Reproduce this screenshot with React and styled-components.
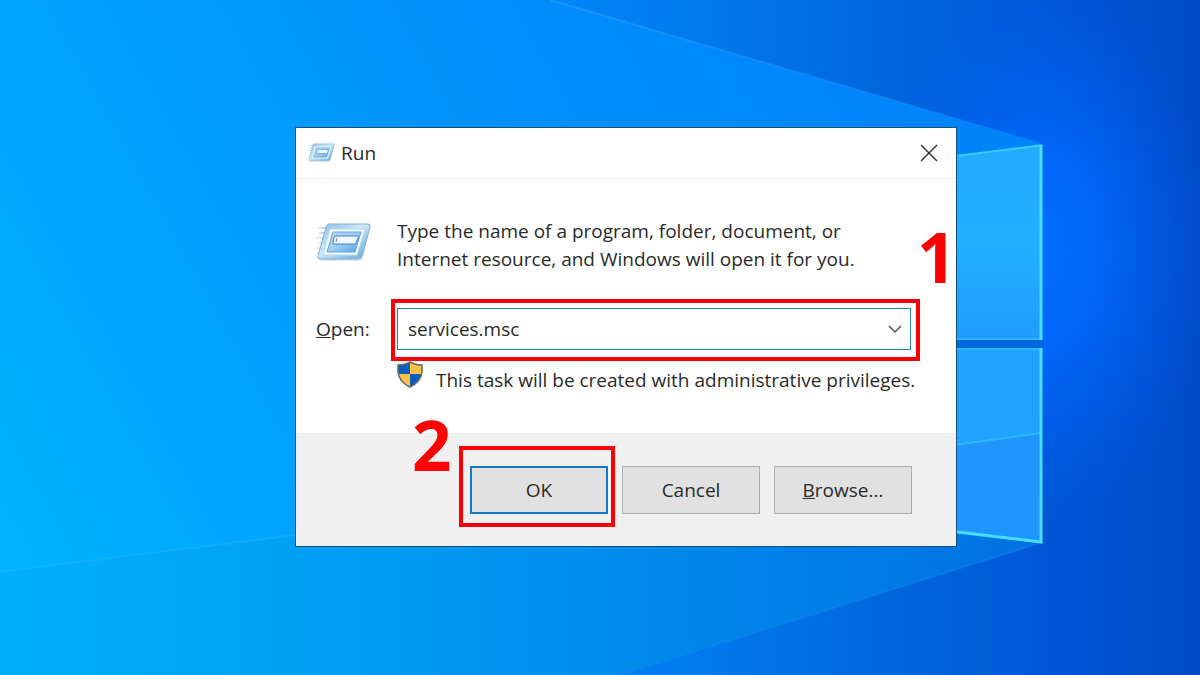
import React from "react";
import styled, { createGlobalStyle } from "styled-components";

const GlobalStyle = createGlobalStyle`
  *, *::before, *::after { box-sizing: border-box; }
  body { margin: 0; font-family: "Open Sans", "Noto Sans", sans-serif; }
`;

const Desktop = styled.main`
  position: relative;
  min-height: 100vh;
  overflow: hidden;
  background: #0078e8;
`;

const WallpaperArt = styled.svg`
  position: absolute;
  inset: 0;
  width: 100%;
  height: 100%;
`;

const Window = styled.section`
  position: absolute;
  top: 127px;
  left: 295px;
  width: 662px;
  border: 1px solid #14507f;
  background: #ffffff;
  color: #2a2a2a;
  font-size: 19px;
  line-height: 28px;
`;

const TitleBar = styled.header`
  display: flex;
  align-items: center;
  gap: 6px;
  height: 51px;
  padding: 0 17px 0 12px;
  border-bottom: 1px solid #ededed;
`;

const Title = styled.h1`
  flex: 1;
  margin: 0;
  font-size: 19px;
  font-weight: 400;
`;

const CloseButton = styled.button`
  display: flex;
  padding: 0;
  border: 0;
  background: none;
  color: #333333;
`;

const Body = styled.div`
  display: grid;
  grid-template-columns: 81px minmax(0, 1fr);
  align-items: center;
  padding: 38px 45px 37px 20px;
`;

const BodyIcon = styled.div`
  display: flex;
  align-self: start;
  padding-top: 6px;
`;

const Message = styled.p`
  margin: 0;
  white-space: nowrap;
`;

const FieldLabel = styled.label`
  margin-top: 35px;
`;

const ComboBox = styled.div`
  position: relative;
  display: flex;
  height: 42px;
  margin-top: 35px;
  border: 1px solid #2f7f9f;
`;

const ComboInput = styled.input`
  flex: 1;
  min-width: 0;
  padding: 0 10px;
  border: 0;
  outline: 0;
  background: transparent;
  color: inherit;
  font: inherit;
`;

const ComboArrow = styled.button`
  display: flex;
  align-items: center;
  justify-content: center;
  width: 30px;
  padding: 0;
  border: 0;
  background: none;
  color: #555555;
`;

const PrivilegeNote = styled.p`
  grid-column: 2;
  display: flex;
  align-items: flex-end;
  gap: 13px;
  margin: 11px 0 0;
  padding-bottom: 2px;
  white-space: nowrap;

  svg { flex: none; margin-bottom: 6px; }
`;

const Footer = styled.footer`
  display: flex;
  justify-content: flex-end;
  gap: 14px;
  padding: 33px 44px 32px;
  background: #f0f0f0;
`;

const ButtonSlot = styled.div`
  position: relative;
`;

const DialogButton = styled.button`
  width: 138px;
  height: 48px;
  padding: 0;
  border: ${(p) => (p.$primary ? "2px solid #1878c8" : "1px solid #adadad")};
  background: #e1e1e1;
  color: inherit;
  font: inherit;
`;

const Highlight = styled.div`
  position: absolute;
  inset: ${(p) => p.$inset};
  border: 4px solid #fb0007;
  pointer-events: none;
`;

const StepNumber = styled.span`
  position: absolute;
  top: ${(p) => p.$top};
  left: ${(p) => p.$left};
  color: #ff0000;
  font-size: 69px;
  font-weight: 700;
  line-height: 70px;
`;

function Wallpaper() {
  return (
    <WallpaperArt viewBox="0 0 1200 675" preserveAspectRatio="none" aria-hidden="true">
      <defs>
        <linearGradient id="base" x1="0" y1="0" x2="1200" y2="0" gradientUnits="userSpaceOnUse">
          <stop offset="0" stopColor="#00a4f6" />
          <stop offset="0.45" stopColor="#0088f8" />
          <stop offset="0.6" stopColor="#0078ea" />
          <stop offset="0.75" stopColor="#0066dc" />
          <stop offset="0.88" stopColor="#0056d6" />
          <stop offset="1" stopColor="#004ac6" />
        </linearGradient>
        <linearGradient id="beam" x1="0" y1="560" x2="900" y2="60" gradientUnits="userSpaceOnUse">
          <stop offset="0" stopColor="#00b4ff" />
          <stop offset="0.3" stopColor="#00a2fc" />
          <stop offset="0.6" stopColor="#0092fb" />
          <stop offset="1" stopColor="#0084fa" />
        </linearGradient>
        <linearGradient id="lower" x1="0" y1="0" x2="1042" y2="0" gradientUnits="userSpaceOnUse">
          <stop offset="0" stopColor="#00b0fc" />
          <stop offset="0.3" stopColor="#009ff4" />
          <stop offset="0.65" stopColor="#0088ea" />
          <stop offset="1" stopColor="#0070e2" />
        </linearGradient>
        <radialGradient
          id="glow"
          cx="0"
          cy="0"
          r="1"
          gradientUnits="userSpaceOnUse"
          gradientTransform="translate(1040 250) scale(170 270)"
        >
          <stop offset="0" stopColor="#006eff" />
          <stop offset="0.35" stopColor="#006aff" stopOpacity="0.85" />
          <stop offset="1" stopColor="#0060f0" stopOpacity="0" />
        </radialGradient>
        <linearGradient id="top-edge" x1="550" y1="0" x2="1040" y2="0" gradientUnits="userSpaceOnUse">
          <stop offset="0" stopColor="#2ba0ff" stopOpacity="0.6" />
          <stop offset="1" stopColor="#2b90ff" stopOpacity="0.1" />
        </linearGradient>
        <linearGradient id="pane" x1="0" y1="145" x2="0" y2="340" gradientUnits="userSpaceOnUse">
          <stop offset="0" stopColor="#22aaff" />
          <stop offset="0.5" stopColor="#22b0ff" />
          <stop offset="1" stopColor="#209cff" />
        </linearGradient>
      </defs>
      <rect width="1200" height="675" fill="url(#base)" />
      <rect width="1200" height="675" fill="url(#glow)" />
      <path d="M0 0H550L1040 143V500L0 600Z" fill="url(#beam)" />
      <path d="M0 572L295 535L1040 440V543L620 675H0Z" fill="url(#lower)" />
      <path d="M550 0L1040 143" stroke="url(#top-edge)" strokeWidth="2" />
      <path d="M0 572L295 535" stroke="#30bcff" strokeWidth="2" opacity="0.35" />
      <path d="M1040 543L620 675" stroke="#1688f4" strokeWidth="2" opacity="0.4" />
      <path d="M940 338H1044V350H940Z" fill="#0068df" />
      <path d="M940 158L1041 145V339H940Z" fill="url(#pane)" />
      <path d="M940 349H1041V542L940 530Z" fill="#22a2ff" />
      <path d="M940 447L1041 433V542L940 530Z" fill="#1e96fc" />
      <path d="M940 447L1041 433" stroke="#2cb8ff" strokeWidth="2" />
      <path d="M940 158L1041 145.500V339" fill="none" stroke="#38ccff" strokeWidth="2" />
      <path d="M940 339H1041M940 349H1041" stroke="#28b4ff" strokeWidth="2" />
      <path d="M1041 145V340M1041 348V542L940 530" fill="none" stroke="#48dcff" strokeWidth="3" />
    </WallpaperArt>
  );
}

function RunIcon({ width, height }) {
  return (
    <svg width={width} height={height} viewBox="0 0 56 40" aria-hidden="true">
      <defs>
        <linearGradient id="run-frame" x1="0" y1="0" x2="1" y2="1">
          <stop offset="0" stopColor="#86bce4" />
          <stop offset="0.45" stopColor="#cbe8fa" />
          <stop offset="0.75" stopColor="#8cc2ea" />
          <stop offset="1" stopColor="#6eaadc" />
        </linearGradient>
        <linearGradient id="run-face" x1="0" y1="0" x2="1" y2="1">
          <stop offset="0" stopColor="#b4dcf8" />
          <stop offset="0.5" stopColor="#9ccdf4" />
          <stop offset="1" stopColor="#5a9fe6" />
        </linearGradient>
        <linearGradient id="run-streak" x1="0" y1="0" x2="14" y2="0" gradientUnits="userSpaceOnUse">
          <stop offset="0" stopColor="#9cc8e6" stopOpacity="0.2" />
          <stop offset="1" stopColor="#8bbde0" />
        </linearGradient>
      </defs>
      <g fill="url(#run-streak)">
        <path d="M1 4H14V6H1ZM3 9H13V11H3ZM0 14H11V16H0ZM3 19H10V21H3ZM1 24H9V26H1ZM1 29H8V31H1Z" />
      </g>
      <path d="M14 3H55L46 38H3Z" fill="#c4d4df" opacity="0.6" />
      <path d="M13 1H52Q55 1 54 4L46 33Q45 36 42 36H4Q1 36 2 33L10 4Q11 1 13 1Z" fill="url(#run-frame)" stroke="#86adca" />
      <path d="M14 6H49L41 32H7Z" fill="#f4fbff" stroke="#b5daf0" />
      <path d="M17 9H45L39 29H11Z" fill="url(#run-face)" stroke="#69a3d3" />
      <path d="M20 13H42Q43 13 42 15L40 20Q40 21 38 21H18Q17 21 17 20L18 14Q19 13 20 13Z" fill="#f0f8ff" stroke="#4a7fb8" />
      <path d="M21 15L20 19" stroke="#6b87a0" />
    </svg>
  );
}

function ShieldIcon() {
  return (
    <svg width="26" height="27" viewBox="0 0 26 27" aria-hidden="true">
      <defs>
        <clipPath id="shield">
          <path d="M13 1Q18 4 25 4V11Q24 21 13 26Q2 21 1 11V4Q8 4 13 1Z" />
        </clipPath>
      </defs>
      <g clipPath="url(#shield)">
        <path d="M0 0H13V13H0ZM13 13H26V27H13Z" fill="#075fbd" />
        <path d="M13 0H26V13H13ZM0 13H13V27H0Z" fill="#ffc044" />
      </g>
      <path d="M13 1Q18 4 25 4V11Q24 21 13 26Q2 21 1 11V4Q8 4 13 1Z" fill="none" stroke="#626a6c" strokeWidth="1.500" />
    </svg>
  );
}

export default function App() {
  return (
    <Desktop>
      <GlobalStyle />
      <Wallpaper />
      <Window role="dialog" aria-labelledby="run-title">
        <TitleBar>
          <RunIcon width="27" height="20" />
          <Title id="run-title">Run</Title>
          <CloseButton type="button" aria-label="Close">
            <svg width="20" height="20" viewBox="0 0 20 20" aria-hidden="true">
              <path d="M2 2L18 18M18 2L2 18" stroke="currentColor" strokeWidth="1.500" />
            </svg>
          </CloseButton>
        </TitleBar>
        <Body>
          <BodyIcon>
            <RunIcon width="56" height="40" />
          </BodyIcon>
          <Message>
            Type the name of a program, folder, document, or
            <br />
            Internet resource, and Windows will open it for you.
          </Message>
          <FieldLabel htmlFor="open">
            <u>O</u>pen:
          </FieldLabel>
          <ComboBox>
            <ComboInput id="open" type="text" defaultValue="services.msc" spellCheck={false} />
            <ComboArrow type="button" aria-label="Show recent commands">
              <svg width="14" height="10" viewBox="0 0 14 10" fill="none" aria-hidden="true">
                <path d="M1 2L7 8L13 2" stroke="currentColor" strokeWidth="1.500" />
              </svg>
            </ComboArrow>
            <Highlight $inset="-10px -10px -12px -7px" />
            <StepNumber $top="-88px" $left="519px">1</StepNumber>
          </ComboBox>
          <PrivilegeNote>
            <ShieldIcon />
            This task will be created with administrative privileges.
          </PrivilegeNote>
        </Body>
        <Footer>
          <ButtonSlot>
            <DialogButton type="button" $primary>OK</DialogButton>
            <Highlight $inset="-20px -7px -13px -11px" />
            <StepNumber $top="-57px" $left="-58px">2</StepNumber>
          </ButtonSlot>
          <DialogButton type="button">Cancel</DialogButton>
          <DialogButton type="button"><u>B</u>rowse...</DialogButton>
        </Footer>
      </Window>
    </Desktop>
  );
}
